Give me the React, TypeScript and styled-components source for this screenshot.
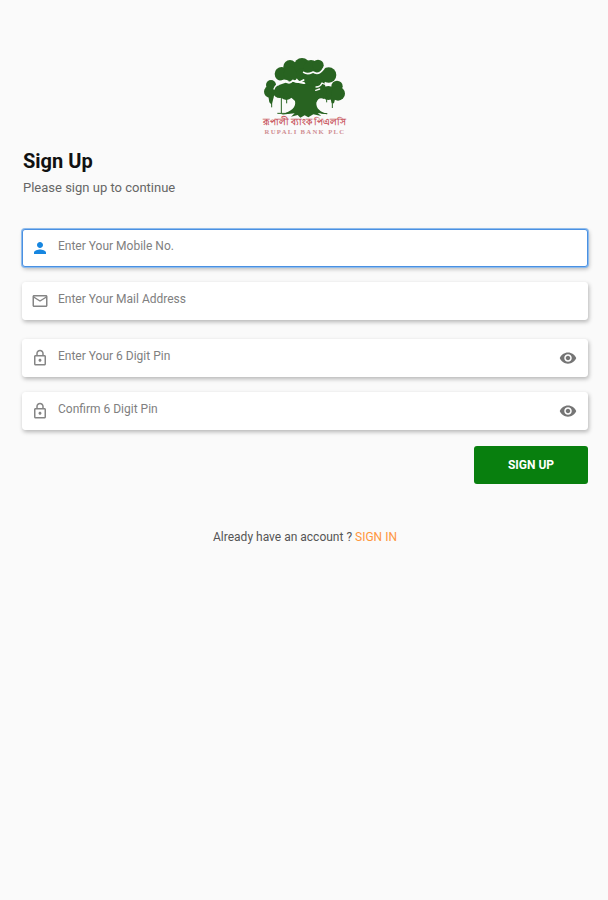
import React, { useId, useState } from "react";
import styled, { createGlobalStyle } from "styled-components";
import { MdPerson, MdOutlineEmail, MdOutlineLock, MdRemoveRedEye } from "react-icons/md";

const GlobalStyle = createGlobalStyle`
  * { box-sizing: border-box; }
  body {
    margin: 0;
    background: #fafafa;
    color: #111;
    font-family: Roboto, "Noto Sans", sans-serif;
  }
`;

const Page = styled.main`
  display: flex;
  flex-direction: column;
  min-height: 100vh;
  padding: 50px 20px 24px 22px;
`;

const Logo = styled.svg`
  display: block;
  align-self: center;
  width: 100px;
  height: 90px;
`;

const Heading = styled.header`
  padding: 8px 1px 0;
`;

const Title = styled.h1`
  margin: 0;
  font-size: 20px;
  line-height: 26px;
  font-weight: 700;
`;

const Subtitle = styled.p`
  margin: 4px 0 0;
  font-size: 13px;
  line-height: 20px;
  color: #666;
`;

const Form = styled.form`
  display: flex;
  flex-direction: column;
  margin-top: 31px;
`;

const FieldGroup = styled.div`
  display: flex;
  flex-direction: column;
  gap: 15px;

  & + & {
    margin-top: 19px;
  }
`;

const Field = styled.div<{ $active?: boolean }>`
  display: flex;
  align-items: center;
  height: 38px;
  padding: 0 10px 0 8px;
  background: #fff;
  border: 1px solid ${(p) => (p.$active ? "#4a90e2" : "#fff")};
  border-radius: 3px;
  box-shadow: ${(p) => (p.$active ? "0 0 0 1px #8fbcec, " : "")}1px 2px 4px rgba(0, 0, 0, 0.28);
`;

const FieldIcon = styled.label<{ $active?: boolean }>`
  display: flex;
  width: 27px;
  font-size: 18px;
  color: ${(p) => (p.$active ? "#1686e0" : "#858585")};
`;

const Input = styled.input`
  flex: 1;
  min-width: 0;
  height: 100%;
  padding: 0 0 4px;
  border: 0;
  outline: 0;
  background: transparent;
  font: 400 12px/16px Roboto, sans-serif;
  color: #333;

  &::placeholder {
    color: #808080;
    opacity: 1;
  }
`;

const RevealButton = styled.button`
  display: flex;
  padding: 0;
  border: 0;
  background: transparent;
  font-size: 18px;
  color: #757575;
  cursor: pointer;
`;

const Submit = styled.button`
  align-self: flex-end;
  width: 114px;
  height: 38px;
  margin-top: 16px;
  border: 0;
  border-radius: 3px;
  background: #087f0e;
  color: #fff;
  font: 700 12px/16px Roboto, sans-serif;
  cursor: pointer;
`;

const Footer = styled.p`
  margin: 44px 0 0;
  text-align: center;
  font-size: 12px;
  line-height: 18px;
  color: #555;
`;

const SignInLink = styled.a`
  color: #ff963c;
  text-decoration: none;
`;

function BankLogo() {
  return (
    <Logo viewBox="0 0 300 270" role="img" aria-label="Rupali Bank PLC">
      <g fill="#286321">
        <circle cx="48" cy="105" r="15" />
        <circle cx="45" cy="125" r="18" />
        <circle cx="74" cy="125" r="19" />
        <circle cx="94" cy="128" r="22" />
        <circle cx="246" cy="109" r="17" />
        <circle cx="220" cy="129" r="21" />
        <circle cx="249" cy="131" r="21" />
        <path d="M72 105L105 94L145 102L188 100L208 98L216 125L207 147Q191 139 184 158C183 176 196 185 218 193L188 189L199 198L175 193L160 202L149 196L136 203L128 195L108 200L119 190L78 194C110 184 124 172 120 153L104 139L75 119Z" />
        <circle cx="80" cy="72" r="21" />
        <circle cx="105" cy="50" r="20" />
        <circle cx="108" cy="72" r="22" />
        <circle cx="141" cy="48" r="24" />
        <circle cx="144" cy="75" r="21" />
        <circle cx="168" cy="52" r="22" />
        <circle cx="189" cy="46" r="17" />
        <circle cx="165" cy="86" r="20" />
        <circle cx="191" cy="82" r="24" />
        <circle cx="221" cy="75" r="23" />
        <path d="M40 139H57L50 164L43 157ZM226 144H241L237 160H230Z" />
      </g>
      <g fill="none" stroke="#286321" strokeWidth="3">
        <path d="M50 145V172M79 142V190M95 142V160M215 140V157M232 145V174" />
        <path d="M67 190Q92 192 110 187M187 184Q201 192 217 191" />
      </g>
      <g fill="none" stroke="#fafafa" strokeWidth="5" strokeLinecap="round" strokeLinejoin="round">
        <path d="M60 90Q72 99 88 91Q103 106 114 91Q128 103 146 90M146 67C159 76 169 68 174 66Q191 77 206 56" />
        <path d="M183 111Q196 111 201 99Q212 107 230 99M182 121L194 117M57 117Q59 109 67 104" strokeWidth="4" />
      </g>
      <text x="149" y="226" textAnchor="middle" fontFamily="Noto Sans, sans-serif" fontSize="26" fontWeight="700" fill="#c95761">রূপালী ব্যাংক পিএলসি</text>
      <text x="150" y="251" textAnchor="middle" fontFamily="Liberation Serif, serif" fontSize="20" fontWeight="700" letterSpacing="4" fill="#cf8d91">RUPALI BANK PLC</text>
    </Logo>
  );
}

type EntryProps = {
  label: string;
  icon: React.ReactNode;
  type?: string;
  active?: boolean;
  secret?: boolean;
};

function Entry({ label, icon, type = "text", active, secret }: EntryProps) {
  const id = useId();
  const [shown, setShown] = useState(false);
  return (
    <Field $active={active}>
      <FieldIcon htmlFor={id} aria-label={label} $active={active}>{icon}</FieldIcon>
      <Input id={id} type={secret && !shown ? "password" : type} placeholder={label} />
      {secret && (
        <RevealButton type="button" aria-label="Show pin" aria-pressed={shown} onClick={() => setShown(!shown)}>
          <MdRemoveRedEye />
        </RevealButton>
      )}
    </Field>
  );
}

export default function App() {
  return (
    <>
      <GlobalStyle />
      <Page>
        <BankLogo />
        <Heading>
          <Title>Sign Up</Title>
          <Subtitle>Please sign up to continue</Subtitle>
        </Heading>
        <Form onSubmit={(e) => e.preventDefault()}>
          <FieldGroup>
            <Entry label="Enter Your Mobile No." icon={<MdPerson />} type="tel" active />
            <Entry label="Enter Your Mail Address" icon={<MdOutlineEmail />} type="email" />
          </FieldGroup>
          <FieldGroup>
            <Entry label="Enter Your 6 Digit Pin" icon={<MdOutlineLock />} secret />
            <Entry label="Confirm 6 Digit Pin" icon={<MdOutlineLock />} secret />
          </FieldGroup>
          <Submit type="submit">SIGN UP</Submit>
        </Form>
        <Footer>
          Already have an account ? <SignInLink href="#sign-in">SIGN IN</SignInLink>
        </Footer>
      </Page>
    </>
  );
}
